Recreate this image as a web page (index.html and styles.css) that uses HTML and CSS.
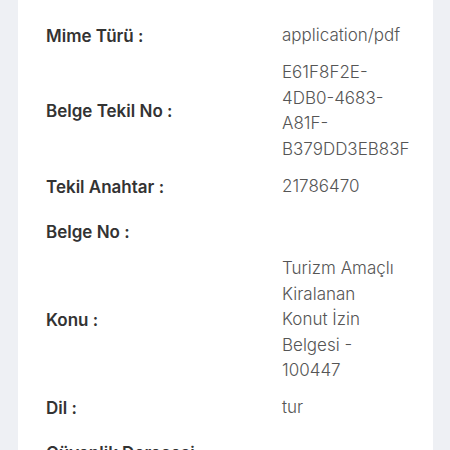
FILE: index.html
```html
<!DOCTYPE html>
<html lang="tr">
<head>
  <meta charset="UTF-8">
  <meta name="viewport" content="width=device-width, initial-scale=1.0">
  <title>Belge Bilgileri</title>
  <link rel="stylesheet" href="styles.css">
</head>
<body>
  <div class="page">
    <div class="info_card">
      <div class="info_row">
        <div class="info_label">Mime Türü :</div>
        <div class="info_value">application/pdf</div>
      </div>
      <div class="info_row">
        <div class="info_label">Belge Tekil No :</div>
        <div class="info_value">E61F8F2E-<br>4DB0-4683-<br>A81F-<br>B379DD3EB83F</div>
      </div>
      <div class="info_row">
        <div class="info_label">Tekil Anahtar :</div>
        <div class="info_value">21786470</div>
      </div>
      <div class="info_row">
        <div class="info_label">Belge No :</div>
        <div class="info_value"></div>
      </div>
      <div class="info_row">
        <div class="info_label">Konu :</div>
        <div class="info_value">Turizm Amaçlı Kiralanan Konut İzin Belgesi - 100447</div>
      </div>
      <div class="info_row">
        <div class="info_label">Dil :</div>
        <div class="info_value">tur</div>
      </div>
      <div class="info_row">
        <div class="info_label">Güvenlik Derecesi :</div>
        <div class="info_value"></div>
      </div>
    </div>
  </div>
</body>
</html>
```

FILE: styles.css
```css
body {
  margin: 0;
  background-color: #eef0f4;
  font-family: Inter, "Noto Sans", sans-serif;
  font-size: 17px;
}
.page {
  padding: 0 17px 0 18px;
}
.info_card {
  background-color: white;
  padding: 13px 0 40px 28px;
}
.info_row {
  display: grid;
  grid-template-columns: 236px 118px;
  align-items: center;
  min-height: 41px;
  padding: 2px 0;
}
.info_label {
  font-weight: 600;
  color: #333;
  line-height: 26px;
}
.info_value {
  font-weight: 300;
  color: #555;
  line-height: 25.5px;
}
```
